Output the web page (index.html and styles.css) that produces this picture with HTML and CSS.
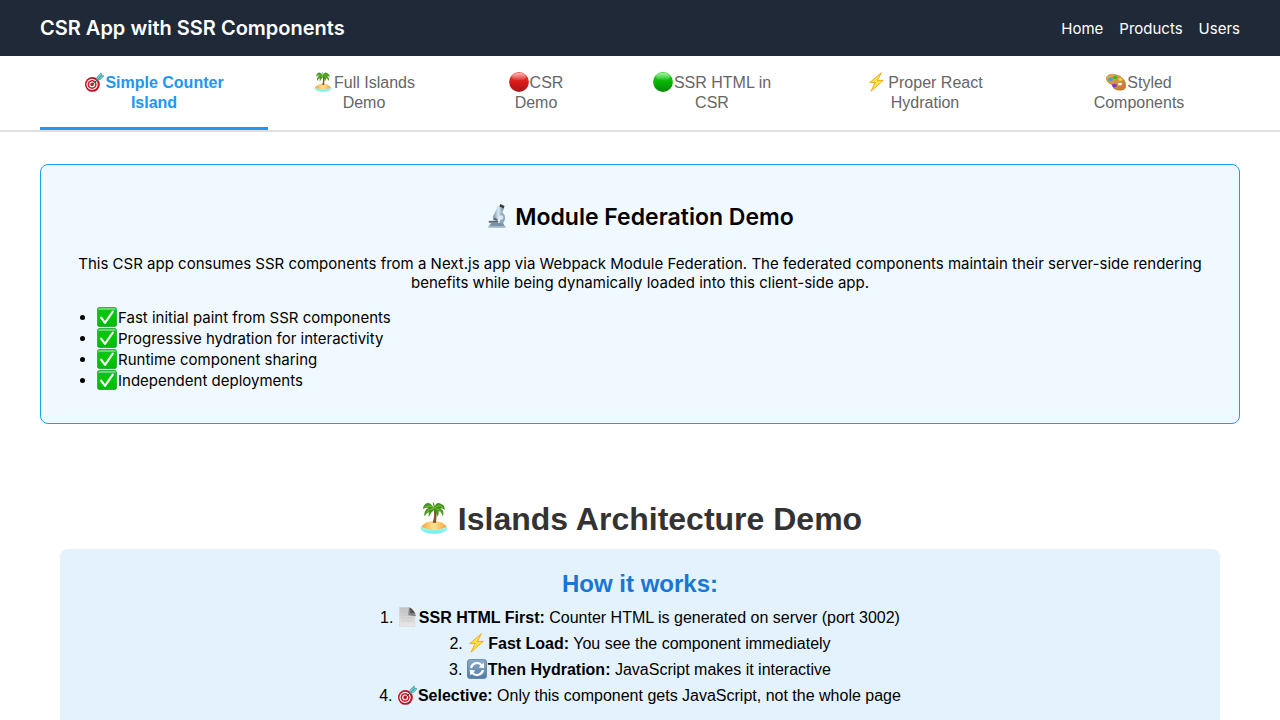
FILE: index.html
```html
<!DOCTYPE html>
<html lang="en">
<head>
<meta charset="utf-8">
<meta name="viewport" content="width=device-width, initial-scale=1">
<title>CSR App with SSR Components</title>
<link rel="stylesheet" href="styles.css">
</head>
<body>
<svg class="sprite" aria-hidden="true">
  <defs>
    <linearGradient id="g-red" x1="0" y1="0" x2="0" y2="1"><stop offset="0" stop-color="#f04a43"/><stop offset=".5" stop-color="#d91a18"/><stop offset="1" stop-color="#a91519"/></linearGradient>
    <linearGradient id="g-green" x1="0" y1="0" x2="0" y2="1"><stop offset="0" stop-color="#27d51f"/><stop offset=".5" stop-color="#06b405"/><stop offset="1" stop-color="#078807"/></linearGradient>
    <linearGradient id="g-shine" x1="0" y1="0" x2="0" y2="1"><stop offset="0" stop-color="#fff" stop-opacity=".6"/><stop offset="1" stop-color="#fff" stop-opacity="0"/></linearGradient>
    <linearGradient id="g-check" x1="0" y1="0" x2="0" y2="1"><stop offset="0" stop-color="#16bd2a"/><stop offset=".5" stop-color="#00c800"/><stop offset="1" stop-color="#00b90b"/></linearGradient>
    <linearGradient id="g-sync" x1="0" y1="0" x2="0" y2="1"><stop offset="0" stop-color="#8daac6"/><stop offset="1" stop-color="#527da8"/></linearGradient>
    <linearGradient id="g-page" x1="0" y1="0" x2="0" y2="1"><stop offset="0" stop-color="#c2c2c2"/><stop offset="1" stop-color="#e8e8e8"/></linearGradient>
    <linearGradient id="g-sand" x1="0" y1="0" x2="1" y2="0"><stop offset="0" stop-color="#f7a235"/><stop offset=".5" stop-color="#ffe293"/><stop offset="1" stop-color="#f2a23a"/></linearGradient>
    <linearGradient id="g-sea" x1="0" y1="0" x2="0" y2="1"><stop offset="0" stop-color="#c5fff5"/><stop offset="1" stop-color="#6eeee8"/></linearGradient>
    <linearGradient id="g-wood" x1="0" y1="0" x2="1" y2="1"><stop offset="0" stop-color="#e6ae4e"/><stop offset="1" stop-color="#b97826"/></linearGradient>
    <linearGradient id="g-steel" x1="0" y1="0" x2="1" y2="0"><stop offset="0" stop-color="#75889a"/><stop offset=".5" stop-color="#d8e8f3"/><stop offset="1" stop-color="#72889c"/></linearGradient>
  </defs>
  <symbol id="target" viewBox="-1 0 20 20">
    <circle cx="7.4" cy="12.4" r="7.4" fill="#bd1423"/><circle cx="7.1" cy="12.4" r="5.6" fill="#fff"/><circle cx="7.1" cy="12.4" r="4.5" fill="#cf1b2b"/><circle cx="7.1" cy="12.4" r="2.9" fill="#fff"/><circle cx="7.1" cy="12.4" r="1.8" fill="#d3152a"/>
    <path d="M7 12.5 14.5 6.2" stroke="#34464d" stroke-width="1"/><path d="M11.8 8.2 12 4.8 16.2.8l.5 2.4 2.6.3-3.6 4.1Z" fill="#65c9ca" stroke="#398d96" stroke-width=".5"/><path d="m12.4 7.8 4.6-4.6" stroke="#307982" stroke-width=".6"/>
  </symbol>
  <symbol id="island" viewBox="-1 0 20 20">
    <ellipse cx="9" cy="16.6" rx="8.4" ry="3.2" fill="url(#g-sea)"/><path d="M1 15.7Q3.3 11.8 9 11.8t8 3.9Q12.7 17.6 9 17.4T1 15.7Z" fill="url(#g-sand)"/>
    <path d="M8.4 3.8Q9.9 7.5 8.2 13l2 .1Q11 8 9.7 3.6Z" fill="#82532b"/>
    <path d="M9 3.7Q6.5-.3 4.4.8 2.6 1.4 2 4.4 4.4 3.2 5.8 3.8 2.6 4.8 3 8.9 4.6 6.5 6.2 6.2 5.3 7.4 5.8 9.4 7.4 6.1 9.1 4.9 10.6 6.7 10.8 9.3 12.5 7.4 11.7 5.7 14 6.5 14.5 9 15.8 5.6 13 4 14.3 3.6 15.6 4.9 16 2.1 13.4 1.2 10.8-.5 9.4 2.8 9.6.9 8.1 0Z" fill="#43921d"/><path d="M3.4 3.2Q6.5 1.4 9 4 11.7 1 14.5 3.5M4.2 6.6Q6.2 4.2 8.8 4.2M10 4.3q2.5-.2 4 2.4" fill="none" stroke="#7bc735" stroke-width=".6"/>
  </symbol>
  <symbol id="red" viewBox="0 0 20 20"><circle cx="10" cy="10" r="9.9" fill="url(#g-red)"/><ellipse cx="10" cy="4.8" rx="7.1" ry="4" fill="url(#g-shine)"/></symbol>
  <symbol id="green" viewBox="0 0 20 20"><circle cx="10" cy="10" r="9.9" fill="url(#g-green)"/><ellipse cx="10" cy="4.8" rx="7.1" ry="4" fill="url(#g-shine)"/></symbol>
  <symbol id="bolt" viewBox="0 0 20 20"><path d="M14.4.7 2.8 10.5 8.3 10.3 4 19.2 16.3 8.3l-6 .2Z" fill="#ffe34a" stroke="#f6a821" stroke-width="1" stroke-linejoin="round"/></symbol>
  <symbol id="palette" viewBox="0 0 20 20">
    <path d="M.4 7C-.1 3.1 5 1.1 10.2 2.8 16.3 4.3 20.7 9.8 19.7 14.7 19 18.8 13.7 19 8.7 17 7 16.3 7.5 14.5 6.1 12.9 4.4 11.4.8 10.8.4 7Z" fill="url(#g-wood)" stroke="#a9671f" stroke-width=".5"/><ellipse cx="14" cy="12.1" rx="2" ry="1.3" fill="#fff"/>
    <ellipse cx="4.6" cy="7.4" rx="2.3" ry="1.8" fill="#2fa8e9"/><ellipse cx="9" cy="5.4" rx="2.3" ry="1.7" fill="#3bb62e"/><ellipse cx="14.3" cy="7.5" rx="2" ry="1.4" fill="#f2d33a"/><ellipse cx="8.4" cy="13.6" rx="2.4" ry="1.8" fill="#8034c8"/><path d="m14.1 15 3-2.4 2 1.4-2 3Z" fill="#e86b4c"/>
  </symbol>
  <symbol id="scope" viewBox="0 0 24 24">
    <path d="M14.5 9.2Q19.5 13.5 14.6 19.5" fill="none" stroke="#8fa8ba" stroke-width="4"/><path d="m12.2 2 5.8 2.5-5.2 10.8-6-2.6Z" fill="url(#g-steel)"/><path d="m14.4.1 4.2 2-1 2.3-4.3-1.9Z" fill="#353c42"/><path d="m7.5 13 4.4 1.9-1 2.4-3.8-1.7Z" fill="#5b6c7a"/><path d="M2.8 16.8h9.4v2H2.8Z" fill="#5c6c78"/><path d="M5 19h12l2 3.6H3Z" fill="#7892a7"/><circle cx="15.1" cy="13.4" r="2.2" fill="#dce9f2"/><path d="M2.3 22h17.2v1.8H2.3Z" fill="#a0b6c6"/>
  </symbol>
  <symbol id="check" viewBox="0 0 20 20"><rect x=".3" y=".3" width="19.4" height="19.4" rx="2.7" fill="url(#g-check)" stroke="#18992c" stroke-width=".6"/><path d="M2 1.2h16q.6 0 .8 1.6H1.2Q1.3 1.2 2 1.2Z" fill="#85df88"/><path d="M4 10.5 8 15.8 15.8 4.6" fill="none" stroke="#fff" stroke-width="2.1" stroke-linecap="round" stroke-linejoin="round"/></symbol>
  <symbol id="page" viewBox="0 0 20 20"><path d="M1.5.3h10l5.3 6.2V19.7H1.5Z" fill="url(#g-page)" stroke="#d1d1d1" stroke-width=".5"/><path d="M11 .5q2.3 2 1.1 5.1 3.7-.2 6 3.2L17.2 9.2l-7-.9Z" fill="#858585"/><path d="M11.4.5q3.6 1 6.2 6.9-2-1.7-5.5-1.3Q12.8 3.2 11.4.5Z" fill="#505050"/><path d="M3.5 5H10M3.5 8H10M3.5 11h11M3.5 14h11" stroke="#b9b9b9" stroke-width=".4"/></symbol>
  <symbol id="sync" viewBox="0 0 20 20"><rect x=".4" y=".4" width="19.2" height="19.2" rx="3" fill="url(#g-sync)" stroke="#507698" stroke-width=".8"/><path d="M4 9A6.2 6.2 0 0 1 14.6 6M16 11A6.2 6.2 0 0 1 5.4 14" fill="none" stroke="#fff" stroke-width="2.2"/><path d="m11.7 8.4 5.6.8-.7-5.8ZM8.3 11.6l-5.6-.8.7 5.8Z" fill="#fff"/></symbol>
</svg>

<header class="header">
  <div class="brand">CSR App with SSR Components</div>
  <nav class="links"><a href="#home">Home</a><a href="#products">Products</a><a href="#users">Users</a></nav>
</header>

<nav class="tabs" aria-label="Demos">
  <button class="tab active" type="button"><svg class="emoji"><use href="#target"/></svg>Simple Counter<br>Island</button>
  <button class="tab" type="button"><svg class="emoji"><use href="#island"/></svg>Full Islands<br>Demo</button>
  <button class="tab" type="button"><svg class="emoji"><use href="#red"/></svg>CSR<br>Demo</button>
  <button class="tab" type="button"><svg class="emoji"><use href="#green"/></svg>SSR HTML in<br>CSR</button>
  <button class="tab" type="button"><svg class="emoji"><use href="#bolt"/></svg>Proper React<br>Hydration</button>
  <button class="tab" type="button"><svg class="emoji"><use href="#palette"/></svg>Styled<br>Components</button>
</nav>

<main class="main">
  <section class="intro">
    <h2><svg class="emoji"><use href="#scope"/></svg>Module Federation Demo</h2>
    <p>This CSR app consumes SSR components from a Next.js app via Webpack Module Federation. The federated components maintain their server-side rendering benefits while being dynamically loaded into this client-side app.</p>
    <ul>
      <li><svg class="emoji"><use href="#check"/></svg>Fast initial paint from SSR components</li>
      <li><svg class="emoji"><use href="#check"/></svg>Progressive hydration for interactivity</li>
      <li><svg class="emoji"><use href="#check"/></svg>Runtime component sharing</li>
      <li><svg class="emoji"><use href="#check"/></svg>Independent deployments</li>
    </ul>
  </section>

  <section class="demo">
    <h1><svg class="emoji"><use href="#island"/></svg>Islands Architecture Demo</h1>
    <div class="how">
      <h2>How it works:</h2>
      <ol>
        <li><svg class="emoji"><use href="#page"/></svg><strong>SSR HTML First:</strong> Counter HTML is generated on server (port 3002)</li>
        <li><svg class="emoji"><use href="#bolt"/></svg><strong>Fast Load:</strong> You see the component immediately</li>
        <li><svg class="emoji"><use href="#sync"/></svg><strong>Then Hydration:</strong> JavaScript makes it interactive</li>
        <li><svg class="emoji"><use href="#target"/></svg><strong>Selective:</strong> Only this component gets JavaScript, not the whole page</li>
      </ol>
    </div>
  </section>
</main>
</body>
</html>
```
FILE: styles.css
```css
* {
  box-sizing: border-box;
}

body {
  margin: 0;
  background: #fff;
  color: #000;
  font: 15px/19px Inter, "Liberation Sans", sans-serif;
}

.sprite {
  position: absolute;
  width: 0;
  height: 0;
}

.emoji {
  width: 20px;
  height: 20px;
  margin-right: 1px;
  vertical-align: -4px;
}

.header {
  display: flex;
  align-items: center;
  justify-content: space-between;
  min-height: 56px;
  padding: 0 40px;
  background: #1f2937;
  color: #fff;
}

.brand {
  font-size: 20px;
  line-height: 24px;
  font-weight: 600;
}

.links {
  display: flex;
  gap: 16px;
}

.links a {
  color: #fff;
  text-decoration: none;
}

.tabs {
  display: grid;
  grid-template-columns: 228fr 192fr 152fr 200fr 226fr 202fr;
  padding: 0 40px;
  border-bottom: 2px solid #e0e0e0;
}

.tab {
  padding: 17px 16px 14px;
  border: 0;
  border-bottom: 3px solid transparent;
  background: none;
  color: #666;
  font: 16px/20px "Liberation Sans", sans-serif;
  text-align: center;
  cursor: pointer;
}

.tab .emoji {
  margin-top: -1px;
}

.tab.active {
  border-bottom-color: #2196f3;
  color: #2196f3;
  font-weight: 700;
}

.main {
  padding: 32px 40px;
}

.intro {
  padding: 16px;
  border: 1px solid #0ea5e9;
  border-radius: 8px;
  background: #f0f9ff;
}

.intro h2 {
  margin: 20px 0;
  font-size: 23px;
  line-height: 33px;
  font-weight: 600;
  text-align: center;
}

.intro h2 .emoji {
  width: 24px;
  height: 24px;
  margin-right: 5px;
  vertical-align: -3px;
}

.intro p {
  margin: 0 0 15px;
  text-align: center;
}

.intro ul {
  margin: 0 0 16px;
  padding-left: 40px;
  line-height: 21px;
}

.intro li .emoji {
  vertical-align: top;
}

.demo {
  padding: 76px 20px 20px;
  font-family: "Liberation Sans", sans-serif;
  font-size: 16px;
  text-align: center;
}

.demo h1 {
  margin: 0 0 11px;
  color: #333;
  font-size: 32px;
  line-height: 38px;
}

.demo h1 .emoji {
  width: 32px;
  height: 32px;
  margin-right: 8px;
}

.how {
  padding: 20px;
  border-radius: 8px;
  background: #e3f2fd;
}

.how h2 {
  margin: 0 0 6px;
  color: #1976d2;
  font-size: 24px;
  line-height: 30px;
}

.how ol {
  margin: 0;
  padding: 0;
  line-height: 26px;
  list-style-position: inside;
}
```
